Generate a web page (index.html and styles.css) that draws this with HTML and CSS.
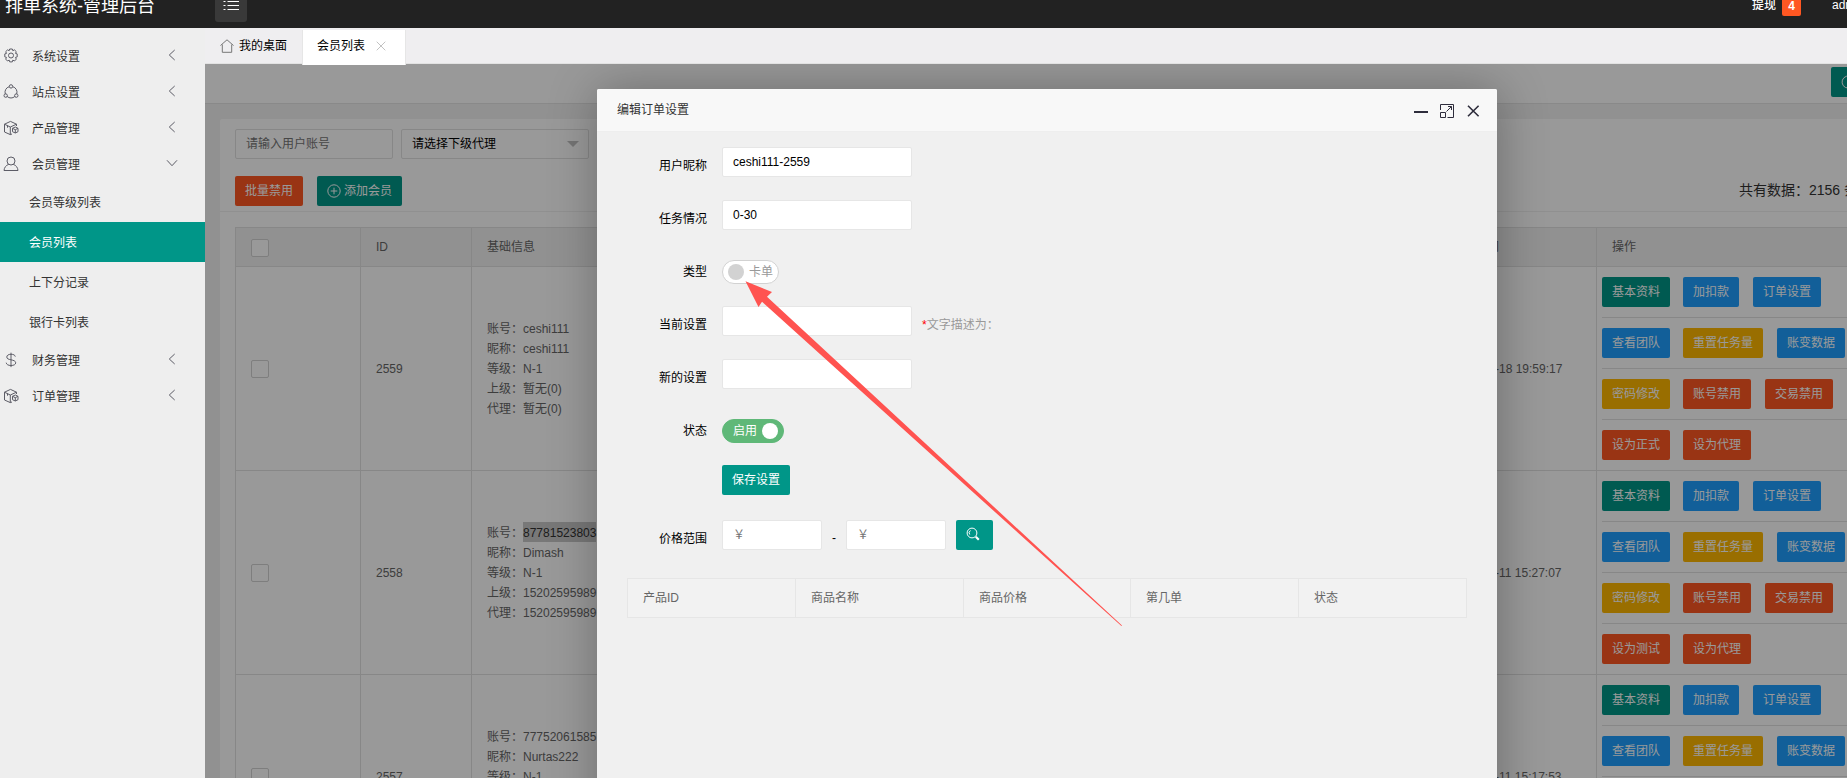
FILE: index.html
```html
<!DOCTYPE html>
<html lang="zh-CN">
<head>
<meta charset="utf-8">
<title>排单系统-管理后台</title>
<link rel="stylesheet" href="styles.css">
</head>
<body>
<svg class="defs" width="0" height="0">
  <symbol id="chev" viewBox="0 0 12 12"><path d="M8.700 1 3.300 6l5.400 5"/></symbol>
  <symbol id="box" viewBox="0 0 16 16"><path d="M9 14 7.300 14.600 1.500 12V4.200L7.500 1.400l6 2.800v1.800M1.500 4.200 7.300 7v7.600M7.300 7l6.200-2.800M4.500 5.700v2"/><path d="M12.300 7 15 8.300v3.400L12.300 13 9.500 11.700V8.300zM9.500 8.300l2.800 1.400L15 8.300M12.300 9.700V13"/></symbol>
</svg>
<header class="top">
  <div class="brand">排单系统-管理后台</div>
  <div class="toggle"><svg width="16" height="12" viewBox="0 0 16 12"><path d="M4.500 1.500H16M4.500 5.500H16M4.500 9.500H16M.5 1.500h2M.5 5.500h2M.5 9.500h2"/></svg></div>
  <div class="top-right"><span>提现</span><span class="badge">4</span><span class="user">admin</span></div>
</header>
<div class="shell">
  <nav class="side">
    <div class="item"><svg class="ic" viewBox="0 0 16 16"><path d="M6.700 1h2.600l.5 1.700 1.700-.8 1.800 1.800-.8 1.700 1.700.5v3l-1.700.5.8 1.700-1.800 1.900-1.700-.9-.5 1.800H6.700l-.5-1.800-1.700.9-1.800-1.900.8-1.700-1.700-.5v-3l1.700-.5-.8-1.700 1.800-1.800 1.700.8z"/><circle cx="8" cy="7.500" r="2.500"/></svg><span>系统设置</span><svg class="chev"><use href="#chev"/></svg></div>
    <div class="item"><svg class="ic" viewBox="0 0 16 16"><path d="M6.200 2.700A5.700 5.700 0 0 0 2.300 10M9.800 2.700A5.700 5.700 0 0 1 13.700 10M4.200 12.500a5.600 5.600 0 0 0 7.600 0"/><circle cx="8" cy="2.400" r="1.700"/><circle cx="2.700" cy="11.600" r="1.700"/><circle cx="13.300" cy="11.600" r="1.700"/></svg><span>站点设置</span><svg class="chev"><use href="#chev"/></svg></div>
    <div class="item"><svg class="ic"><use href="#box"/></svg><span>产品管理</span><svg class="chev"><use href="#chev"/></svg></div>
    <div class="item"><svg class="ic" viewBox="0 0 16 16"><circle cx="8" cy="5" r="4"/><path d="M5.700 8.300C2.800 9.500 1.300 11.500 1 14.500h14c-.3-3-1.800-5-4.700-6.200"/></svg><span>会员管理</span><svg class="chev open"><use href="#chev"/></svg></div>
    <div class="sub">会员等级列表</div>
    <div class="sub on">会员列表</div>
    <div class="sub">上下分记录</div>
    <div class="sub">银行卡列表</div>
    <div class="item"><svg class="ic" viewBox="0 0 16 16"><path d="M12.300 4.600C12 3 10.500 2.300 8 2.300S3.800 3.300 3.800 5c0 1.800 1.700 2.300 4.200 2.800s4.700 1.200 4.700 3-2 2.700-4.700 2.700-4.600-1-4.800-2.800M8 .7v14.400"/></svg><span>财务管理</span><svg class="chev"><use href="#chev"/></svg></div>
    <div class="item"><svg class="ic"><use href="#box"/></svg><span>订单管理</span><svg class="chev"><use href="#chev"/></svg></div>
  </nav>
  <div class="main">
    <div class="tabs">
      <div class="tab"><svg width="14" height="14" viewBox="0 0 14 14"><path d="M.5 6.500 7 .8l6.500 5.700M2.300 5.500v7.800h9.400V5.500"/></svg>我的桌面</div>
      <div class="tab active">会员列表<svg width="10" height="10" viewBox="0 0 10 10"><path d="m.7.7 8.600 8.600M9.300.7.7 9.300"/></svg></div>
    </div>
    <div class="frame">
      <div class="crumb"><span class="btn refresh"><svg width="14" height="14" viewBox="0 0 14 14"><path d="M12.500 4.500A6 6 0 1 0 13 8M12.800 1.500v3.200H9.500"/></svg></span></div>
      <div class="card">
        <div class="filters"><div class="field">请输入用户账号</div><div class="select">请选择下级代理<i></i></div></div>
        <div class="actions"><span class="btn red">批量禁用</span><span class="btn add"><svg width="14" height="14" viewBox="0 0 14 14"><circle cx="7" cy="7" r="6.200"/><path d="M7 3.700v6.600M3.700 7h6.600"/></svg>添加会员</span><span class="total">共有数据：2156 条</span></div>
        <div class="table">
          <div class="tr th"><div><i class="ck"></i></div><div>ID</div><div>基础信息</div><div>注册时间</div><div>操作</div></div>
          <div class="tr">
            <div class="c-ck"><i class="ck"></i></div><div class="c-id">2559</div>
            <div class="c-info">账号：ceshi111<br>昵称：ceshi111<br>等级：N-1<br>上级：暂无(0)<br>代理：暂无(0)</div>
            <div class="c-time">-18 19:59:17</div>
            <div class="c-ops">
              <p><span class="btn">基本资料</span><span class="btn blue">加扣款</span><span class="btn blue">订单设置</span></p>
              <p><span class="btn blue">查看团队</span><span class="btn gold">重置任务量</span><span class="btn blue">账变数据</span></p>
              <p><span class="btn gold">密码修改</span><span class="btn red">账号禁用</span><span class="btn red">交易禁用</span></p>
              <p><span class="btn red">设为正式</span><span class="btn red">设为代理</span></p>
            </div>
          </div>
          <div class="tr">
            <div class="c-ck"><i class="ck"></i></div><div class="c-id">2558</div>
            <div class="c-info">账号：<mark>87781523803</mark><br>昵称：Dimash<br>等级：N-1<br>上级：15202595989<br>代理：15202595989</div>
            <div class="c-time">-11 15:27:07</div>
            <div class="c-ops">
              <p><span class="btn">基本资料</span><span class="btn blue">加扣款</span><span class="btn blue">订单设置</span></p>
              <p><span class="btn blue">查看团队</span><span class="btn gold">重置任务量</span><span class="btn blue">账变数据</span></p>
              <p><span class="btn gold">密码修改</span><span class="btn red">账号禁用</span><span class="btn red">交易禁用</span></p>
              <p><span class="btn red">设为测试</span><span class="btn red">设为代理</span></p>
            </div>
          </div>
          <div class="tr">
            <div class="c-ck"><i class="ck"></i></div><div class="c-id">2557</div>
            <div class="c-info">账号：77752061585<br>昵称：Nurtas222<br>等级：N-1</div>
            <div class="c-time">-11 15:17:53</div>
            <div class="c-ops">
              <p><span class="btn">基本资料</span><span class="btn blue">加扣款</span><span class="btn blue">订单设置</span></p>
              <p class="line"><span class="btn blue">查看团队</span><span class="btn gold">重置任务量</span><span class="btn blue">账变数据</span></p>
            </div>
          </div>
        </div>
      </div>
      <div class="shade"></div>
      <section class="modal">
        <div class="m-title"><span>编辑订单设置</span>
          <svg width="66" height="14" viewBox="0 0 66 14"><path class="thick" d="M0 8h14"/><path d="M26.500 6V.5h13v13H33.500M26.500 8.500h5v5h-5zM32.500 7.500l4.800-4.800M34 2.500h3.500V6"/><path class="x" d="m54 1.700 10.600 10.600M64.600 1.700 54 12.300"/></svg>
        </div>
        <div class="form">
          <div class="row"><label>用户昵称</label><div class="inp">ceshi111-2559</div></div>
          <div class="row"><label>任务情况</label><div class="inp">0-30</div></div>
          <div class="row"><label>类型</label><div class="switch"><i></i>卡单</div></div>
          <div class="row"><label>当前设置</label><div class="inp"></div><span class="hint"><b>*</b>文字描述为：</span></div>
          <div class="row"><label>新的设置</label><div class="inp"></div></div>
          <div class="row"><label>状态</label><div class="switch on">启用<i></i></div></div>
          <div class="row save"><label></label><span class="btn">保存设置</span></div>
          <div class="row price"><label>价格范围</label><div class="inp sm">￥</div><span class="dash">-</span><div class="inp sm">￥</div><span class="btn find"><svg width="14" height="14" viewBox="0 0 14 14"><circle cx="6" cy="6" r="4.900"/><path d="M3.700 7.500a2.800 2.800 0 0 1 .8-4"/><path class="h" d="m9.800 9.800 3 3"/></svg></span></div>
          <div class="goods"><div>产品ID</div><div>商品名称</div><div>商品价格</div><div>第几单</div><div>状态</div></div>
        </div>
      </section>
    </div>
  </div>
</div>
<svg class="arrow" width="378" height="346" viewBox="745 281 378 346"><path d="M745.500 281.300 772 292l-5 4.700L1122 625.500l-.6.600L762 301.700l-3.500 5.300z"/></svg>
</body>
</html>
```
FILE: styles.css
```css
* { box-sizing: border-box; }
body { margin: 0; height: 778px; overflow: hidden; position: relative; display: flex; flex-direction: column; font: 12px/20px "Liberation Sans", "Noto Sans CJK SC", sans-serif; color: #333; }
svg { fill: none; stroke: currentColor; flex: none; }
i { font-style: normal; }
.defs { position: absolute; }
.top { height: 28px; flex: none; background: #222; color: #fff; display: flex; align-items: flex-start; overflow: hidden; }
.brand { width: 215px; padding-left: 5px; font-size: 18px; line-height: 24px; margin-top: -6px; }
.toggle { width: 32px; height: 22px; background: #393939; border-radius: 0 0 3px 3px; padding-left: 8px; }
.toggle svg { display: block; }
.top-right { margin-left: auto; width: 95px; flex: none; display: flex; margin-top: -5px; white-space: nowrap; font-weight: 500; }
.top-right span { flex: none; }
.top-right .badge { width: 19px; height: 21px; margin-left: 6px; background: #ff5722; border-radius: 2px; text-align: center; line-height: 23px; font-weight: bold; }
.user { margin-left: 31px; }
.shell { flex: 1; min-height: 0; display: flex; }
.side { width: 205px; flex: none; background: #eee; padding-top: 10px; }
.item { height: 36px; display: flex; align-items: center; padding: 0 27px 0 3px; }
.item span { margin: 2px 0 0 13px; flex: 1; }
.ic { width: 16px; height: 16px; color: #5c5c66; margin-top: -1px; }
.chev { width: 12px; height: 12px; color: #5c5c66; margin-top: -3px; }
.chev.open { transform: rotate(-90deg); }
.sub { height: 40px; line-height: 42px; padding-left: 29px; }
.sub.on { background: #009688; color: #fff; }
.main { flex: 1; min-width: 0; display: flex; flex-direction: column; }
.tabs { height: 36px; flex: none; background: #efeef0; border-bottom: 1px solid #e2e2e2; display: flex; padding-top: 2px; color: #000; }
.tab { width: 97px; height: 32px; display: flex; align-items: center; padding-left: 15px; gap: 5px; }
.tab svg { color: #777; }
.tab.active { position: relative; z-index: 2; width: 104px; height: 35px; padding: 0 0 3px 14px; gap: 11px; background: #fff; border: 1px solid #e6e6e6; border-width: 0 1px; }
.tab.active svg { color: #c2c2c2; }
.frame { flex: 1; min-height: 0; position: relative; overflow: hidden; background: #f2f2f2; color: #666; }
.crumb { height: 40px; background: #fff; border-bottom: 1px solid #e5e5e5; padding: 3px 0 0 1626px; }
.btn { display: inline-block; height: 30px; line-height: 30px; padding: 0 10px; background: #009688; color: #fff; border-radius: 2px; white-space: nowrap; }
.blue { background: #1e9fff; }
.gold { background: #ffb800; }
.red { background: #ff5722; }
.refresh { width: 34px; display: flex; align-items: center; }
.card { margin: 15px 0 0 15px; background: #fff; border-radius: 2px 0 0 0; height: 700px; }
.filters { display: flex; gap: 8px; padding: 10px 15px 0; }
.field, .select { height: 30px; border: 1px solid #e2e2e2; border-radius: 2px; padding: 0 10px; line-height: 28px; }
.field { width: 158px; color: #757575; }
.select { width: 188px; color: #000; line-height: 30px; display: flex; justify-content: space-between; align-items: center; }
.select i { border: 6px solid transparent; border-top-color: #c2c2c2; margin-top: 5px; margin-right: -1px; }
.actions { display: flex; gap: 14px; height: 53px; padding: 17px 0 0 15px; border-bottom: 1px solid #f0f0f0; }
.add { width: 85px; display: flex; align-items: center; gap: 3px; }
.total { font-size: 14px; color: #333; margin-left: auto; width: 108px; line-height: 28px; white-space: nowrap; }
.table { margin: 15px 0 0 15px; border: 1px solid #e2e2e2; border-width: 1px 0 0 1px; }
.tr { height: 204px; display: grid; grid-template-columns: 125px 111px 964px 161px 1fr; border-bottom: 1px solid #e2e2e2; }
.tr > div { border-right: 1px solid #e2e2e2; padding-left: 15px; }
.tr > div:last-child { border-right: 0; }
.th { height: 39px; background: #f2f2f2; line-height: 38px; }
.th > div:first-child { padding-top: 11px; }
.ck { display: block; width: 18px; height: 18px; border: 1px solid #d2d2d2; border-radius: 2px; background: #fff; }
.tr > .c-ck { padding-top: 93px; }
.c-id { padding-top: 92px; }
.c-info { padding-top: 52px; }
.tr > .c-time { padding: 92px 0 0 59px; }
.c-info mark { display: inline-block; height: 20px; background: linear-gradient(#c8c8c8, #c8c8c8) 0 0 / 100% 19px no-repeat; box-shadow: 0 -1px #c8c8c8; color: #333; }
.tr > .c-ops { padding: 10px 0 0 5px; }
.c-ops p { margin: 0 0 10px; padding-bottom: 10px; border-bottom: 1px solid #e2e2e2; display: flex; gap: 14px; }
.c-ops p .btn:first-child { margin-right: -1px; }
.c-ops p:last-child:not(.line) { border: 0; margin: 0; padding: 0; }
.shade { position: absolute; inset: 0; background: rgba(0, 0, 0, .4); }
.modal { position: absolute; left: 392px; top: 25px; width: 900px; height: 760px; background: #f0f0f0; border-radius: 2px; box-shadow: 1px 1px 50px rgba(0, 0, 0, .3); color: #000; }
.m-title { height: 43px; background: #f8f8f8; border-bottom: 1px solid #eee; border-radius: 2px 2px 0 0; display: flex; align-items: center; justify-content: space-between; padding: 0 17px 0 20px; color: #333; }
.m-title svg { color: #2e2d3c; margin-top: 2px; }
.m-title .thick { stroke-width: 2; }
.m-title .x { stroke-width: 1.6; }
.form { padding-top: 15px; }
.row { height: 53px; display: flex; align-items: flex-start; }
.row label { width: 110px; margin-right: 15px; padding-top: 9px; text-align: right; }
.inp { width: 190px; height: 30px; background: #fff; border: 1px solid #e6e6e6; border-radius: 2px; padding-left: 10px; line-height: 28px; }
.inp.sm { width: 100px; color: #757575; }
.hint { color: #999; padding: 9px 0 0 10px; }
.hint b { color: #f00; font-weight: normal; }
.switch { width: 57px; height: 24px; margin-top: 7px; border: 1px solid #d2d2d2; border-radius: 20px; background: #fff; color: #999; display: flex; align-items: center; gap: 5px; padding-left: 5px; line-height: 20px; }
.switch i { width: 16px; height: 16px; border-radius: 50%; background: #d2d2d2; }
.switch.on { width: 62px; background: #5fb878; border-color: #5fb878; color: #fff; padding-left: 10px; }
.switch.on i { background: #fff; }
.save { height: 55px; }
.price { height: 58px; }
.dash { width: 24px; text-align: center; padding-top: 8px; }
.find { margin-left: 10px; width: 37px; padding: 7px 0 0 10px; line-height: 0; }
.find .h { stroke-width: 2.2; }
.goods { margin-left: 30px; width: 840px; height: 40px; display: grid; grid-template-columns: 168px 168px 167px 168px 1fr; border: 1px solid #e6e6e6; background: #f2f2f2; color: #666; line-height: 38px; }
.goods div { padding-left: 15px; border-right: 1px solid #e6e6e6; }
.goods div:last-child { border: 0; }
.arrow { position: absolute; left: 745px; top: 281px; fill: #ff5350; stroke: none; }
```
